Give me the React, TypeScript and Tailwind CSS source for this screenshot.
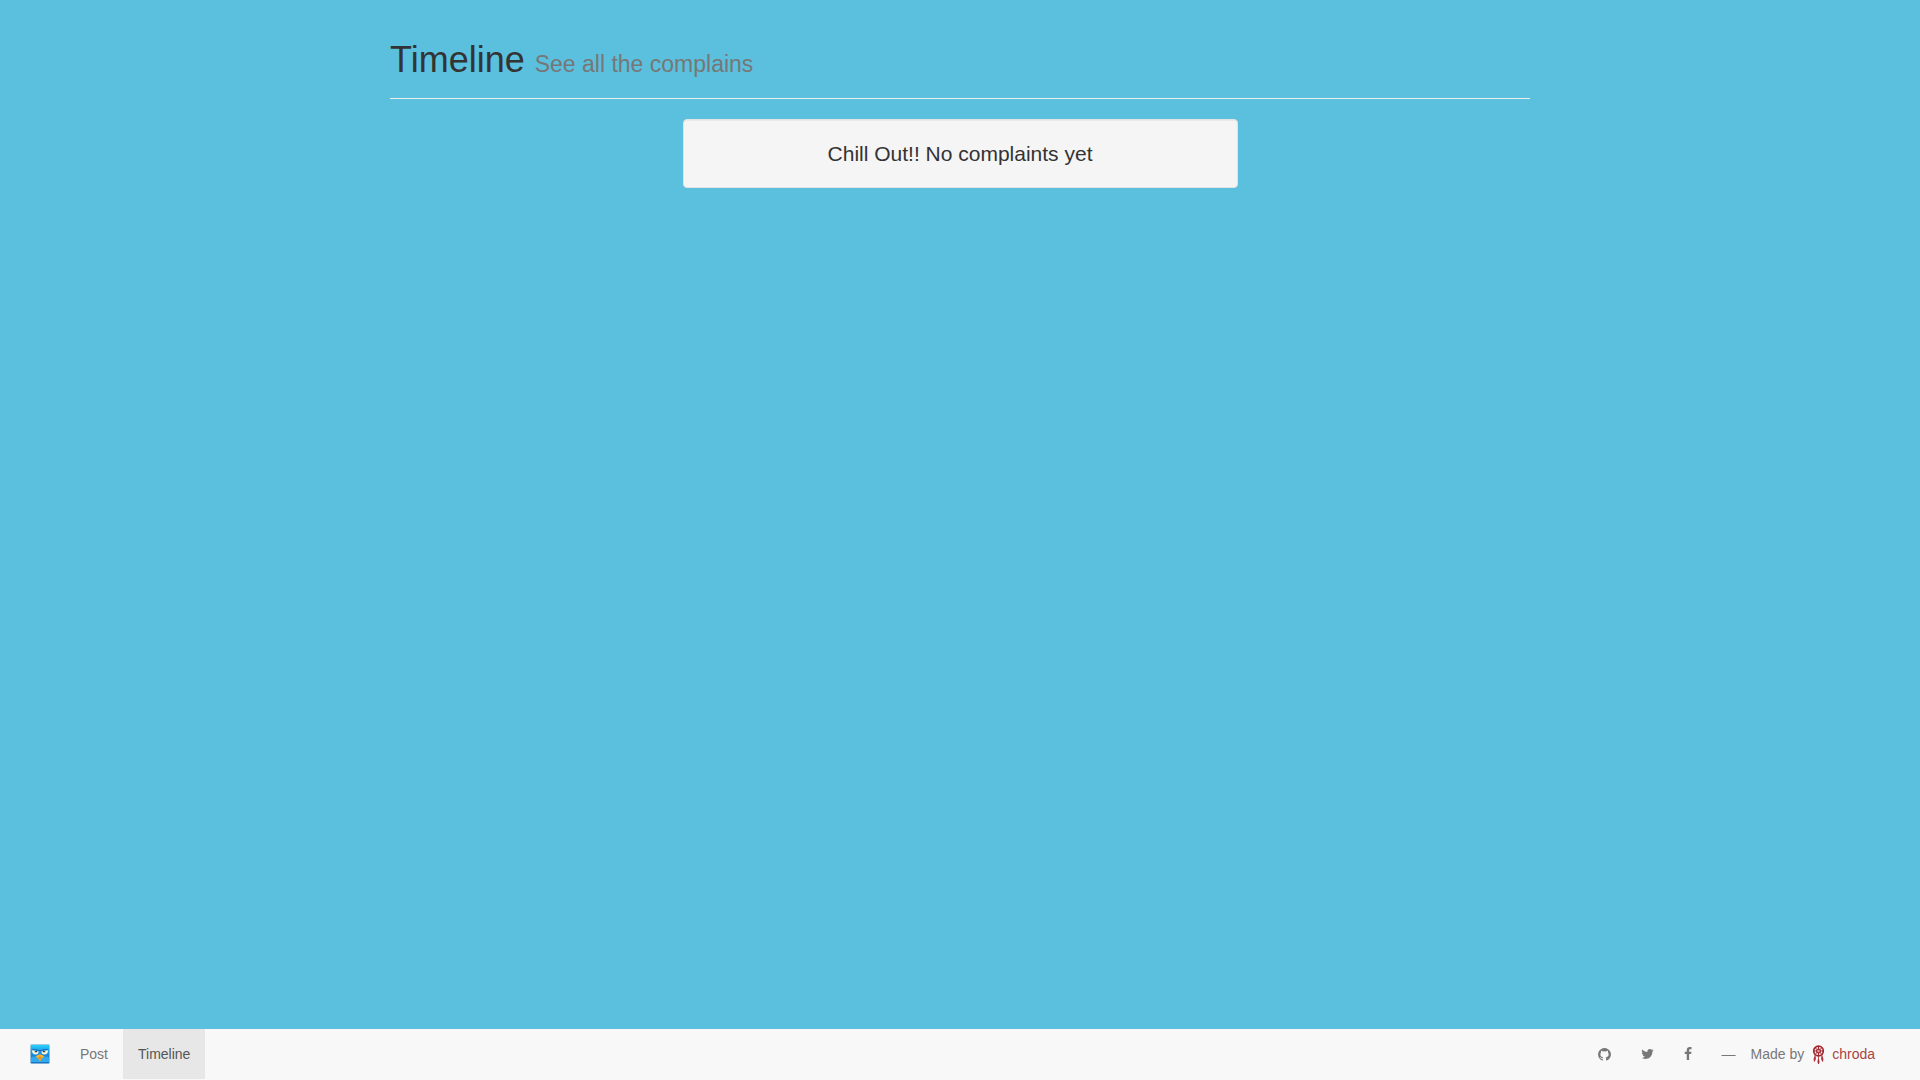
import React from "react";

function BirdLogo() {
  return (
    <svg width="20" height="20" viewBox="0 0 20 20" aria-hidden="true">
      <defs>
        <linearGradient id="sky" x1="0" y1="0" x2="0" y2="1">
          <stop offset="0" stopColor="#2fd3fc" />
          <stop offset="0.28" stopColor="#1ba6ee" />
          <stop offset="0.6" stopColor="#1a84d8" />
          <stop offset="1" stopColor="#1c8fe0" />
        </linearGradient>
      </defs>
      <rect x="0.5" y="0.5" width="19" height="19" rx="1.2" fill="url(#sky)" stroke="#9fb4c2" strokeWidth="0.5" />
      <path d="M1 14q1-2.500 3-1q1-1.500 3 0l3 2l3-2q2-1.500 3 0q2-1.500 3 1v4.500H1z" fill="#2fa9ef" />
      <path d="M2 5q4-.5 6.500 1h3Q14 4.500 18 5v1q-4 0-6.500 1.500h-3Q6 6 2 6z" fill="#1873c4" />
      <path d="M2 6.200L8.500 7.200Q8.800 10.500 5.500 10.500T2 6.200zM18 6.200L11.500 7.200Q11.200 10.500 14.500 10.500T18 6.200z" fill="#fbf6de" />
      <path d="M4.800 7h2.400v1.300H4.800zM12.800 7h2.400v1.300h-2.400z" fill="#39434d" />
      <path d="M10 10.200Q13.500 11 14.200 12.600Q12 13.500 10 17.500Q8 13.500 5.800 12.600Q6.500 11 10 10.200z" fill="#fbb02c" />
      <path d="M8.300 13q1.700-.7 3.400 0q-.8 1.500-1.700 4.500Q9.200 14.500 8.300 13z" fill="#e88d22" />
      <path d="M1 18.700h18" stroke="#1263b5" strokeWidth="0.800" />
    </svg>
  );
}

function Dreamcatcher() {
  return (
    <svg width="20" height="20" viewBox="0 0 20 20" fill="none" stroke="#a4262f" aria-hidden="true">
      <circle cx="10.500" cy="7" r="4.800" strokeWidth="1.700" />
      <circle cx="10.500" cy="7" r="1.900" fill="#a4262f" fillOpacity="0.4" strokeWidth="1.200" />
      <path d="M10.500 2v3M10.500 9v3M5.500 7h3M12.500 7h3M7 3.500l2 2M14 3.500l-2 2M7 10.500l2-2M14 10.500l-2-2" strokeWidth="1" />
      <path d="M7 11v3M10.500 12v4M14 11v3" strokeWidth="0.800" />
      <path d="M7 12.500q1.300 2.500-.6 5q-1.200-2.500.6-5zM14 12.500q-1.300 2.500.6 5q1.200-2.500-.6-5zM10.500 15q1.300 2.500 0 5q-1.300-2.500 0-5z" fill="#a4262f" strokeWidth="0.700" />
    </svg>
  );
}

function GithubIcon() {
  return (
    <svg width="13" height="15" viewBox="128 0 1536 1792" fill="currentColor" aria-hidden="true">
      <path d="M896 128q209 0 385.500 103t279.500 279.500 103 385.500q0 251-146.500 451.500t-378.500 277.500q-27 5-40-7t-13-30q0-3 .5-76.500t.5-134.500q0-97-52-142 57-6 102.500-18t94-39 81-66.500 53-105 20.500-150.500q0-119-79-206 37-91-8-204-28-9-81 11t-92 44l-38 24q-93-26-192-26t-192 26q-16-11-42.500-27t-83.500-38.500-85-13.500q-45 113-8 204-79 87-79 206 0 85 20.500 150t52.500 105 80.500 67 94 39 102.500 18q-39 36-49 103-21 10-45 15t-57 5-65.500-21.500-55.500-62.500q-19-32-48.500-52t-49.500-24l-20-3q-21 0-29 4.500t-5 11.500 9 14 13 12l7 5q22 10 43.500 38t31.500 51l10 23q13 38 44 61.500t67 30 69.500 7 55.500-3.500l23-4q0 38 .5 88.500t.5 54.500q0 18-13 30t-40 7q-232-77-378.500-277.500t-146.500-451.500q0-209 103-385.500t279.500-279.500 385.500-103z" />
    </svg>
  );
}

function TwitterIcon() {
  return (
    <svg width="13" height="14" viewBox="64 0 1664 1792" fill="currentColor" aria-hidden="true">
      <path d="M1684 408q-67 98-162 167 1 14 1 42 0 130-38 259.500t-115.500 248.500-184.500 210.500-258 146-323 54.500q-271 0-496-145 35 4 78 4 225 0 401-138-105-2-188-64.500t-114-159.500q33 5 61 5 43 0 85-11-112-23-185.500-111.500t-73.500-205.500v-4q68 38 146 41-66-44-105-115t-39-154q0-88 44-163 121 149 294.500 238.500t371.500 99.500q-8-38-8-74 0-134 94.500-228.500t228.500-94.500q140 0 236 102 109-21 205-78-37 115-142 178 93-10 186-50z" />
    </svg>
  );
}

function FacebookIcon() {
  return (
    <svg width="8" height="14" viewBox="384 0 1024 1792" fill="currentColor" aria-hidden="true">
      <path d="M1343 12v264h-157q-86 0-116 36t-30 108v189h293l-39 296h-254v759h-306v-759h-255v-296h255v-218q0-186 104-288.500t277-102.500q147 0 228 12z" />
    </svg>
  );
}

const social = [
  { label: "GitHub", Icon: GithubIcon },
  { label: "Twitter", Icon: TwitterIcon },
  { label: "Facebook", Icon: FacebookIcon },
];

export default function App() {
  return (
    <div className="flex min-h-screen flex-col bg-[#5bc0de] font-['Liberation_Sans',Arial,sans-serif] text-sm text-[#333]">
      <main className="mx-auto w-full max-w-[1170px] grow px-[15px] pt-10">
        <header className="mb-5 border-b border-[#eee] pb-[18px]">
          <h1 className="text-4xl leading-10">
            Timeline <small className="text-[23px] leading-none text-[#777]">See all the complains</small>
          </h1>
        </header>
        <section className="mx-auto w-full max-w-[555px] rounded border border-[#e3e3e3] bg-[#f5f5f5] p-[19px] text-center shadow-[inset_0_1px_1px_rgba(0,0,0,0.05)]">
          <p className="text-[21px] leading-[29px]">Chill Out!! No complaints yet</p>
        </section>
      </main>
      <nav className="sticky bottom-0 flex items-start justify-between border-b border-[#f8f8f8] bg-[#f8f8f8] px-[15px] leading-5 text-[#777]">
        <div className="flex">
          <a href="#" aria-label="Home" className="block px-[15px] py-[15px]">
            <BirdLogo />
          </a>
          <a href="#post" className="block px-[15px] py-[15px]">Post</a>
          <a href="#timeline" aria-current="page" className="block bg-[#e7e7e7] px-[15px] py-[15px] text-[#555]">Timeline</a>
        </div>
        <div className="flex">
          {social.map(({ label, Icon }) => (
            <a key={label} href="#" aria-label={label} className="flex items-center px-[15px]">
              <Icon />
            </a>
          ))}
          <p className="flex items-center py-[15px] pr-[30px] pl-[14px]">
            <span className="mr-[15px]">—</span>
            <span>Made by</span>
            <a href="#chroda" className="flex items-center text-[#a94442]">
              <span className="mx-1"><Dreamcatcher /></span>
              chroda
            </a>
          </p>
        </div>
      </nav>
    </div>
  );
}
